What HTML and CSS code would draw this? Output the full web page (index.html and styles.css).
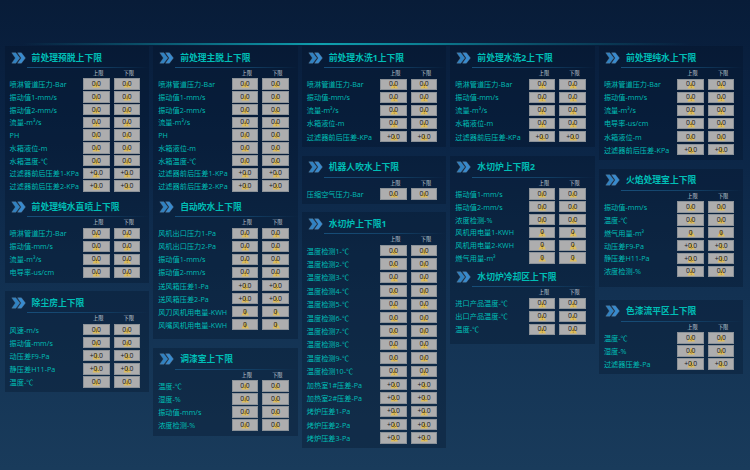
FILE: index.html
```html
<!DOCTYPE html>
<html lang="zh-CN">
<head>
<meta charset="utf-8">
<title>上下限设置</title>
<link rel="stylesheet" href="styles.css">
</head>
<body>
<header class="topbar"></header>
<main class="board" id="board"></main>
<script src="app.js"></script>
</body>
</html>
```
FILE: styles.css
```css
* { box-sizing: border-box; }
body {
  margin: 0;
  width: 750px;
  height: 470px;
  overflow: hidden;
  background: linear-gradient(180deg, #081c38 0, #0a2344 25%, #123152 62%, #193b5b 100%);
  font-family: "Open Sans", "Noto Sans CJK SC", sans-serif;
  color: #00beb6;
}
.topbar {
  height: 46px;
  padding-top: 43px;
}
.topbar::after {
  content: "";
  display: block;
  height: 1.5px;
  background: linear-gradient(90deg, transparent 3%, #0a4d66 18%, #0c8295 34%, #10a0ae 43%, #0c8295 55%, #0a4d66 72%, transparent 92%);
}
.board {
  display: grid;
  grid-template-columns: repeat(5, 144.4px);
  column-gap: 4.2px;
  padding-left: 4.6px;
}
.column { display: flex; flex-direction: column; }
.panel { background: rgba(3, 18, 38, 0.3); }
.panel-title {
  display: flex;
  align-items: center;
  height: 21px;
  padding: 2.5px 0 0 6px;
}
.chevrons { width: 15px; height: 12px; flex: none; }
.panel-title h2 {
  margin: 0 0 0 6px;
  font-size: 8.8px;
  line-height: 18px;
  font-weight: 700;
  white-space: nowrap;
}
.rule {
  height: 1px;
  margin: 0 0 0 22px;
  background: linear-gradient(90deg, #174e79, #123f65 60%, transparent);
}
.limits, .row {
  display: grid;
  grid-template-columns: 69.4px 26.6px 26.6px;
  column-gap: 4px;
  padding-left: 5px;
  align-items: center;
}
.limits {
  height: 9.8px;
  font-size: 5.2px;
  line-height: 9px;
  color: #c3ccd6;
}
.limits span { padding: 1px 0 0 10px; white-space: nowrap; }
.label {
  font-size: 7.2px;
  line-height: 12px;
  white-space: nowrap;
}
.field {
  display: flex;
  align-items: center;
  justify-content: center;
  position: relative;
  height: 11.4px;
  border: 0.6px solid #8c9298;
  background: #adadae;
  color: #15171b;
  font: 6.8px/10px "Open Sans", sans-serif;
  letter-spacing: -0.15px;
}
.field svg {
  position: absolute;
  left: 8.4px;
  top: 1px;
  width: 8.5px;
  height: 8px;
}
.field span { position: relative; }
```
FILE: app.js
```js
// Each column is a list of panels: title, height, gap above, row pitch, rows.
// A row's value defaults to 0.0.
const P = "+0.0";
const columns = [
  [
    { title: "前处理预脱上下限", h: 149, gap: 0, pitch: 12.75, rows: [["喷淋管道压力-Bar"], ["振动值1-mm/s"], ["振动值2-mm/s"], ["流量-m³/s"], ["PH"], ["水箱液位-m"], ["水箱温度-℃"], ["过滤器前后压差1-KPa", P], ["过滤器前后压差2-KPa", P]] },
    { title: "前处理纯水直喷上下限", h: 87.5, gap: 0, pitch: 13.05, rows: [["喷淋管道压力-Bar"], ["振动值-mm/s"], ["流量-m³/s"], ["电导率-us/cm"]] },
    { title: "除尘房上下限", h: 100.5, gap: 8.7, pitch: 13.1, rows: [["风速-m/s"], ["振动值-mm/s"], ["动压差F9-Pa", P], ["静压差H11-Pa", P], ["温度-℃"]] }
  ],
  [
    { title: "前处理主脱上下限", h: 149, gap: 0, pitch: 12.75, rows: [["喷淋管道压力-Bar"], ["振动值1-mm/s"], ["振动值2-mm/s"], ["流量-m³/s"], ["PH"], ["水箱液位-m"], ["水箱温度-℃"], ["过滤器前后压差1-KPa", P], ["过滤器前后压差2-KPa", P]] },
    { title: "自动吹水上下限", h: 144, gap: 0, pitch: 13.05, rows: [["风机出口压力1-Pa"], ["风机出口压力2-Pa"], ["振动值1-mm/s"], ["振动值2-mm/s"], ["送风箱压差1-Pa", P], ["送风箱压差2-Pa", P], ["风刀风机用电量-KWH", "0"], ["风嘴风机用电量-KWH", "0"]] },
    { title: "调漆室上下限", h: 88, gap: 8.7, pitch: 13, rows: [["温度-℃"], ["湿度-%"], ["振动值-mm/s"], ["浓度检测-%"]] }
  ],
  [
    { title: "前处理水洗1上下限", h: 101, gap: 0, pitch: 13.05, rows: [["喷淋管道压力-Bar"], ["振动值-mm/s"], ["流量-m³/s"], ["水箱液位-m"], ["过滤器前后压差-KPa", P]] },
    { title: "机器人吹水上下限", h: 48, gap: 8.7, pitch: 12.8, rows: [["压缩空气压力-Bar"]] },
    { title: "水切炉上下限1", h: 236.2, gap: 8.5, pitch: 13.4, rows: [
      ...Array.from({ length: 10 }, (_, i) => [`温度检测${i + 1}-℃`]),
      ["加热室1#压差-Pa", P], ["加热室2#压差-Pa", P], ["烤炉压差1-Pa", P], ["烤炉压差2-Pa", P], ["烤炉压差3-Pa", P]] }
  ],
  [
    { title: "前处理水洗2上下限", h: 101, gap: 0, pitch: 13.05, rows: [["喷淋管道压力-Bar"], ["振动值-mm/s"], ["流量-m³/s"], ["水箱液位-m"], ["过滤器前后压差-KPa", P]] },
    { title: "水切炉上下限2", h: 109.4, gap: 8.7, pitch: 12.85, rows: [["振动值1-mm/s"], ["振动值2-mm/s"], ["浓度检测-%"], ["风机用电量1-KWH", "0"], ["风机用电量2-KWH", "0"], ["燃气用量-m³", "0"]] },
    { title: "水切炉冷却区上下限", h: 78.6, gap: 0, pitch: 13, rows: [["进口产品温度-℃"], ["出口产品温度-℃"], ["温度-℃"]] }
  ],
  [
    { title: "前处理纯水上下限", h: 114.3, gap: 0, pitch: 13.05, rows: [["喷淋管道压力-Bar"], ["振动值-mm/s"], ["流量-m³/s"], ["电导率-us/cm"], ["水箱液位-m"], ["过滤器前后压差-KPa", P]] },
    { title: "火焰处理室上下限", h: 118.5, gap: 8.4, pitch: 12.9, rows: [["振动值-mm/s"], ["温度-℃"], ["燃气用量-m³", "0"], ["动压差F9-Pa", P], ["静压差H11-Pa", P], ["浓度检测-%"]] },
    { title: "色漆流平区上下限", h: 74, gap: 12.4, pitch: 13, rows: [["温度-℃"], ["湿度-%"], ["过滤器压差-Pa", P]] }
  ]
];

const chevrons = `<svg class="chevrons" viewBox="0 0 15 12"><g stroke="#6b8294" stroke-width=".4"><path fill="#2f82c3" d="M.8.8h4l4 5.2-4 5.2h-4L4.4 6z"/><path fill="#378bd0" d="M6.6.8h3.8l4 5.2-4 5.2H6.6L10.2 6z"/></g></svg>`;
const warning = `<svg viewBox="0 0 17 16"><path fill="#dfbd58" d="M8.5.8 16 15H1z"/><path fill="#7b662b" d="M7.7 5h1.6v5H7.7zM7.7 11.5h1.6V13H7.7z"/></svg>`;
const field = v => `<div class="field">${warning}<span>${v}</span></div>`;
const row = (r, pitch) => `<div class="row" style="height:${pitch}px"><span class="label">${r[0]}</span>${field(r[1] || "0.0").repeat(2)}</div>`;
const panel = p => `<section class="panel" style="height:${p.h}px;margin-top:${p.gap}px">
  <div class="panel-title">${chevrons}<h2>${p.title}</h2></div>
  <div class="rule"></div>
  <div class="limits"><i></i><span>上限</span><span>下限</span></div>
  ${p.rows.map(r => row(r, p.pitch)).join("")}</section>`;

document.getElementById("board").innerHTML =
  columns.map(c => `<div class="column">${c.map(panel).join("")}</div>`).join("");
```
